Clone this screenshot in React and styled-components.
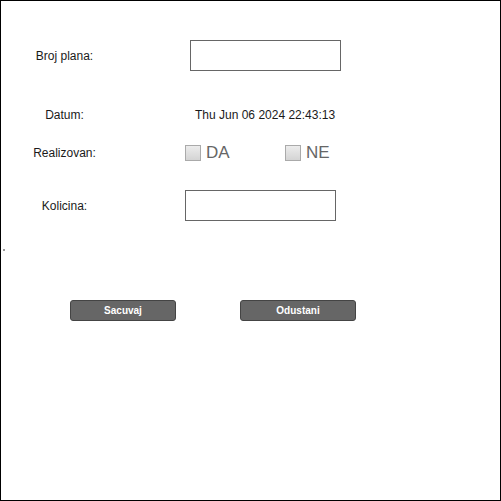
import React from 'react'
import styled, { createGlobalStyle } from 'styled-components'

const Global = createGlobalStyle`
  html, body { margin: 0; padding: 0; background: #fff; }
  body { font-family: "Liberation Sans", Arial, sans-serif; }
`

const App = () => {
  return (
    <>
      <Global />
      <Frame>
        <Row $top={39} $height={31}>
          <Label>Broj plana:</Label>
          <Value $indent={63}>
            <Field $width={151} />
          </Value>
        </Row>
        <Row $top={34} $height={20}>
          <Label>Datum:</Label>
          <Value $indent={68}>
            <DateText>Thu Jun 06 2024 22:43:13</DateText>
          </Value>
        </Row>
        <Row $top={18} $height={20}>
          <Label>Realizovan:</Label>
          <Value $indent={58}>
            <Choice>
              <Box />
              <ChoiceText>DA</ChoiceText>
            </Choice>
            <Choice>
              <Box />
              <ChoiceText>NE</ChoiceText>
            </Choice>
          </Value>
        </Row>
        <Row $top={27} $height={31}>
          <Label>Kolicina:</Label>
          <Value $indent={58}>
            <Field $width={151} />
          </Value>
        </Row>
        <Stray />
        <Buttons>
          <Button $width={106}>Sacuvaj</Button>
          <Button $width={116}>Odustani</Button>
        </Buttons>
      </Frame>
    </>
  )
}

export default App

const Frame = styled.div`
  width: 501px;
  height: 501px;
  box-sizing: border-box;
  border: 1px solid #000;
  display: flex;
  flex-direction: column;
`

const Row = styled.div`
  display: flex;
  align-items: center;
  margin-top: ${p => p.$top}px;
  height: ${p => p.$height}px;
`

const Label = styled.div`
  width: 127px;
  text-align: center;
  font-size: 12px;
  color: #1a1a1a;
`

const Value = styled.div`
  display: flex;
  align-items: center;
  padding-left: ${p => p.$indent - 1}px;
`

const Field = styled.div`
  width: ${p => p.$width}px;
  height: 31px;
  box-sizing: border-box;
  border: 1px solid #666;
  background: #fff;
`

const DateText = styled.span`
  font-size: 12px;
  color: #1a1a1a;
`

const Choice = styled.div`
  display: flex;
  align-items: center;
  width: 100px;
`

const Box = styled.span`
  width: 16px;
  height: 16px;
  box-sizing: border-box;
  border: 1px solid #aaa;
  background: linear-gradient(#ececec, #d4d4d4);
  margin-right: 5px;
`

const ChoiceText = styled.span`
  font-size: 17px;
  color: #666;
`

const Stray = styled.span`
  width: 2px;
  height: 2px;
  margin: 28px 0 0 2px;
  background: #999;
`

const Buttons = styled.div`
  display: flex;
  gap: 64px;
  padding-left: 69px;
  margin-top: 49px;
`

const Button = styled.div`
  width: ${p => p.$width}px;
  height: 21px;
  box-sizing: border-box;
  background: #666;
  border: 1px solid #444;
  border-radius: 3px;
  color: #fff;
  font-size: 10px;
  font-weight: bold;
  display: flex;
  align-items: center;
  justify-content: center;
`
